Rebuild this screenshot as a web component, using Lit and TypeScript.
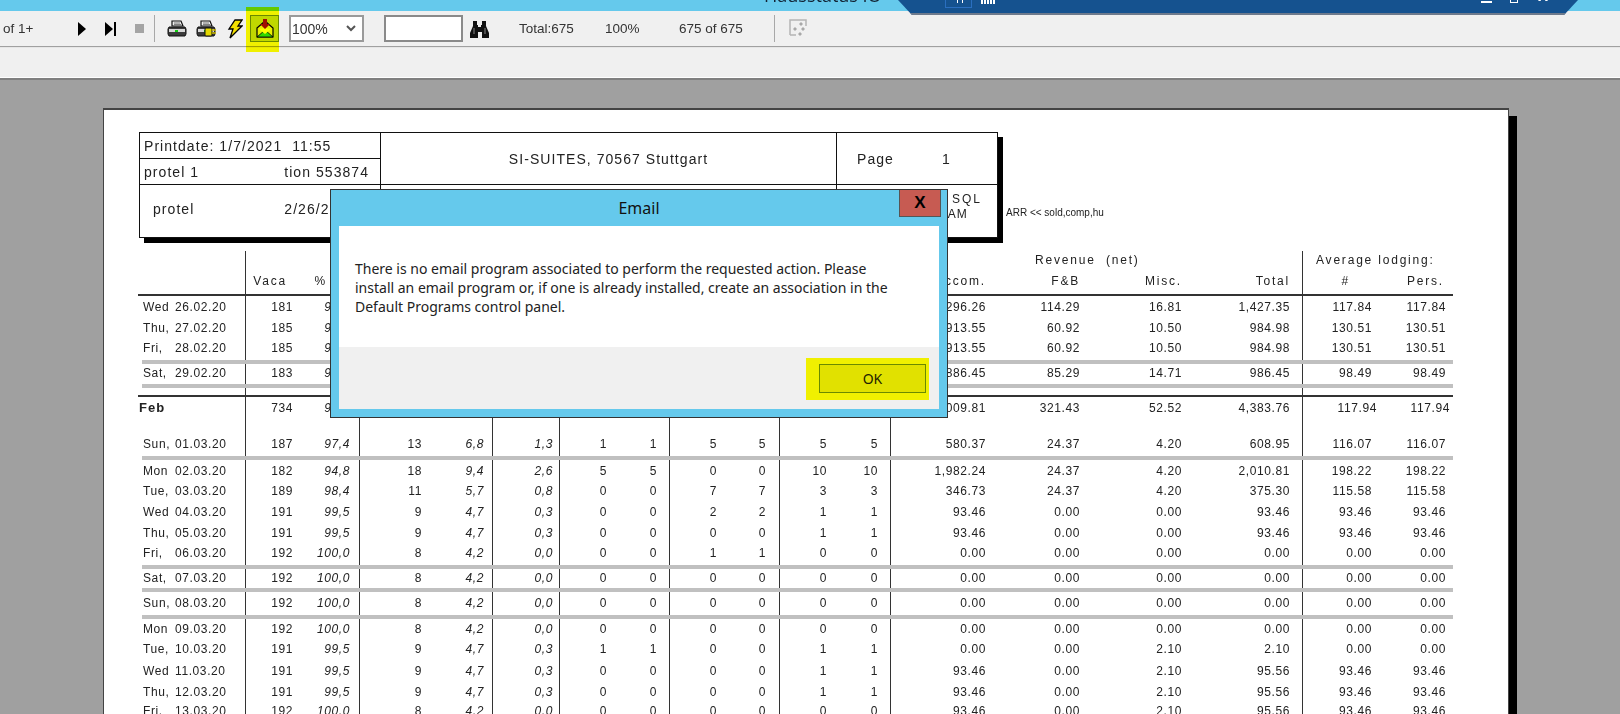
// app.ts
import { LitElement, html, css, svg } from 'lit';
import { customElement } from 'lit/decorators.js';

type Line = { c: number; cells: string[]; feb?: boolean };

const line = (c: number, s: string, feb = false): Line => ({ c, cells: s.split('|'), feb });

const blank = Array(19).fill('').join('|');

const hiddenRow = (day: string, date: string, vaca: string, pct: string, rest: string) =>
  `${day}|${date}|${vaca}|${pct}|||||||||` + '|' + rest;

// groups of rows between the grey rules: [top, bottom, rows]
const segments: { top: number; bottom: number; rows: Line[]; after?: string }[] = [
  {
    top: 296,
    bottom: 360,
    after: 'sep',
    rows: [
      line(307, hiddenRow('Wed', '26.02.20', '181', '94,3', '1,296.26|114.29|16.81|1,427.35|117.84|117.84')),
      line(328, hiddenRow('Thu,', '27.02.20', '185', '96,4', '913.55|60.92|10.50|984.98|130.51|130.51')),
      line(348, hiddenRow('Fri,', '28.02.20', '185', '96,4', '913.55|60.92|10.50|984.98|130.51|130.51')),
    ],
  },
  {
    top: 364,
    bottom: 384,
    after: 'sep',
    rows: [line(373, hiddenRow('Sat,', '29.02.20', '183', '95,3', '886.45|85.29|14.71|986.45|98.49|98.49'))],
  },
  { top: 388, bottom: 395, after: 'rule', rows: [line(391, blank)] },
  {
    top: 397,
    bottom: 456,
    after: 'sep',
    rows: [
      line(408, hiddenRow('Feb', '', '734', '95,6', '3,009.81|321.43|52.52|4,383.76|117.94|117.94'), true),
      line(444, 'Sun,|01.03.20|187|97,4|13|6,8|1,3|1|1|5|5|5|5|580.37|24.37|4.20|608.95|116.07|116.07'),
    ],
  },
  {
    top: 460,
    bottom: 565,
    after: 'sep',
    rows: [
      line(471, 'Mon|02.03.20|182|94,8|18|9,4|2,6|5|5|0|0|10|10|1,982.24|24.37|4.20|2,010.81|198.22|198.22'),
      line(491, 'Tue,|03.03.20|189|98,4|11|5,7|0,8|0|0|7|7|3|3|346.73|24.37|4.20|375.30|115.58|115.58'),
      line(512, 'Wed|04.03.20|191|99,5|9|4,7|0,3|0|0|2|2|1|1|93.46|0.00|0.00|93.46|93.46|93.46'),
      line(533, 'Thu,|05.03.20|191|99,5|9|4,7|0,3|0|0|0|0|1|1|93.46|0.00|0.00|93.46|93.46|93.46'),
      line(553, 'Fri,|06.03.20|192|100,0|8|4,2|0,0|0|0|1|1|0|0|0.00|0.00|0.00|0.00|0.00|0.00'),
    ],
  },
  {
    top: 569,
    bottom: 588,
    after: 'sep',
    rows: [line(578, 'Sat,|07.03.20|192|100,0|8|4,2|0,0|0|0|0|0|0|0|0.00|0.00|0.00|0.00|0.00|0.00')],
  },
  {
    top: 592,
    bottom: 615,
    after: 'sep',
    rows: [line(603, 'Sun,|08.03.20|192|100,0|8|4,2|0,0|0|0|0|0|0|0|0.00|0.00|0.00|0.00|0.00|0.00')],
  },
  {
    top: 619,
    bottom: 730,
    rows: [
      line(629, 'Mon|09.03.20|192|100,0|8|4,2|0,0|0|0|0|0|0|0|0.00|0.00|0.00|0.00|0.00|0.00'),
      line(649, 'Tue,|10.03.20|191|99,5|9|4,7|0,3|1|1|0|0|1|1|0.00|0.00|2.10|2.10|0.00|0.00'),
      line(671, 'Wed|11.03.20|191|99,5|9|4,7|0,3|0|0|0|0|1|1|93.46|0.00|2.10|95.56|93.46|93.46'),
      line(692, 'Thu,|12.03.20|191|99,5|9|4,7|0,3|0|0|0|0|1|1|93.46|0.00|2.10|95.56|93.46|93.46'),
      line(711, 'Fri,|13.03.20|192|100,0|8|4,2|0,0|0|0|0|0|0|0|93.46|0.00|2.10|95.56|93.46|93.46'),
    ],
  },
];

const printer = svg`
  <path d="M5 6V1h9l2 5z" fill="#eee" stroke="#111" stroke-width="1.2"/>
  <path d="M7 3h6M7 4.6h7" stroke="#777"/>
  <path d="M2 7h16l1 2v5l-1 2H2l-1-2V9z" fill="#3c3c3c" stroke="#111"/>
  <rect x="2" y="9" width="16" height="3" fill="#d8d8d8"/>
  <rect x="8" y="10" width="3" height="2" fill="#1c1"/>`;

@customElement('app-root')
export class AppRoot extends LitElement {
  static override styles = css`
    :host {
      display: block;
      position: relative;
      width: 1620px;
      height: 714px;
      overflow: hidden;
      font-family: 'Liberation Sans', Arial, sans-serif;
      color: #222;
      background: #a0a0a0;
    }
    * {
      box-sizing: border-box;
    }
    svg {
      display: block;
      flex: none;
    }

    .strip {
      height: 11px;
      background: #65c9ec;
    }
    .app-title {
      position: absolute;
      left: 764px;
      top: -15px;
      font: 18px/20px 'Open Sans', sans-serif;
      color: #123;
    }
    .session {
      position: absolute;
      left: 898px;
      top: 0;
      width: 680px;
      height: 15px;
      background: #15528f;
      border-bottom: 2px solid #6e7a8c;
      clip-path: polygon(0 0, 100% 0, 666px 100%, 14px 100%);
      color: #fff;
    }
    .pin {
      position: absolute;
      left: 47px;
      top: -1px;
      width: 27px;
      height: 9px;
      border: 1px solid #2a6fc0;
    }
    .pin::after {
      content: '';
      position: absolute;
      left: 11px;
      top: 0;
      width: 4px;
      height: 3px;
      border-right: 1px solid #fff;
      border-left: 1px solid #fff;
    }
    .bars {
      position: absolute;
      left: 83px;
      top: 0;
      width: 14px;
      height: 4px;
      background: repeating-linear-gradient(90deg, #fff 0 2px, #15528f 2px 3px);
    }
    .ip {
      position: absolute;
      left: 297px;
      top: -13px;
      font-size: 14px;
      line-height: 16px;
      white-space: nowrap;
    }
    .min {
      position: absolute;
      left: 583px;
      top: 1px;
      width: 11px;
      height: 2px;
      background: #fff;
    }
    .restore {
      position: absolute;
      left: 612px;
      top: -2px;
      width: 8px;
      height: 5px;
      border: 1px solid #fff;
    }
    .cross {
      position: absolute;
      left: 640px;
      top: -11px;
      font-size: 15px;
      line-height: 14px;
      font-weight: bold;
    }

    .toolbar {
      display: flex;
      align-items: center;
      height: 37px;
      padding-bottom: 1px;
      background: #f0f0f0;
      border-bottom: 1px solid #e6e6e6;
      box-shadow: inset 0 -2px 0 -1px #a0a0a0;
      font-size: 13.5px;
      color: #333;
    }
    .pager {
      width: 78px;
      padding-left: 3px;
    }
    .tb-sep {
      width: 1px;
      height: 27px;
      background: #a8a8a8;
    }
    .mail-btn {
      width: 29px;
      height: 27px;
      margin-left: 7px;
      padding: 3px 0 0 5px;
      background: #c0d8e8;
      border: 1px solid #6a8ab0;
    }
    .zoom-box {
      display: flex;
      align-items: center;
      justify-content: space-between;
      width: 75px;
      height: 27px;
      margin-left: 10px;
      padding: 0 6px 0 1px;
      background: #fff;
      border: 2px solid #9a9a9a;
      font-size: 14px;
    }
    .find {
      width: 79px;
      height: 27px;
      margin-left: 20px;
      background: #fff;
      border: 2px solid #8a8a8a;
    }
    .total {
      width: 86px;
      margin-left: 30px;
    }
    .pct {
      width: 74px;
    }
    .count {
      width: 95px;
    }

    .band {
      height: 32px;
      background: #f0f0f0;
      border-bottom: 2px solid #808080;
      box-shadow: inset 0 -1px 0 #fff;
    }

    .desk {
      height: 634px;
      padding: 28px 0 0 103px;
      background: #a0a0a0;
    }
    .sheet {
      width: 1406px;
      height: 640px;
      padding: 22px 0 0 35px;
      background: #fff;
      border-top: 2px solid #444;
      border-left: 1px solid #444;
      border-right: 1px solid #444;
      box-shadow: 8px 8px 0 #000;
      font-size: 12px;
      letter-spacing: 0.6px;
      color: #222;
      filter: blur(0.3px);
    }

    .top {
      display: flex;
      align-items: flex-start;
    }
    .head-box {
      display: grid;
      grid-template-columns: 241px 456px 160px;
      grid-template-rows: 52px 52px;
      width: 859px;
      height: 106px;
      border: 1px solid #111;
      box-shadow: 5px 5px 0 #000;
      font-size: 14px;
      letter-spacing: 1.05px;
    }
    .hb {
      border-right: 1px solid #111;
      border-bottom: 1px solid #111;
    }
    .hb:nth-child(3n) {
      border-right: none;
    }
    .hb:nth-child(n + 4) {
      border-bottom: none;
    }
    .hb-row {
      display: flex;
      justify-content: space-between;
      height: 25px;
      padding: 5px 11px 0 4px;
      line-height: 17px;
      white-space: pre;
    }
    .hb-row + .hb-row {
      height: 27px;
      border-top: 1px solid #111;
    }
    .owner {
      display: flex;
      padding: 16px 0 0 13px;
      line-height: 17px;
      white-space: nowrap;
    }
    .owner span + span {
      margin-left: 90px;
    }
    .title-cell {
      display: flex;
      align-items: center;
      justify-content: center;
      padding-top: 1px;
    }
    .page-cell {
      display: flex;
      align-items: center;
      padding-left: 20px;
    }
    .page-cell span + span {
      margin-left: 48px;
    }
    .sql {
      padding: 7px 0 0 103px;
      font-size: 12px;
      line-height: 15px;
      white-space: nowrap;
    }
    .sql b {
      display: block;
      margin-left: 12px;
      font-weight: normal;
      letter-spacing: 2px;
    }
    .note {
      margin: 76px 0 0 8px;
      font-size: 10px;
      line-height: 10px;
      letter-spacing: 0;
      white-space: nowrap;
    }

    .table {
      width: 1311px;
      margin: 13px 0 0 3px;
    }
    .row {
      display: grid;
      grid-template-columns:
        33px 71px 46px 68px 61px 72px 67px 46px 64px 46px 64px 46px 65px
        94px 94px 102px 122px 68px 74px 8px;
    }
    .c {
      padding-top: var(--pad);
      line-height: 14px;
      text-align: right;
      white-space: nowrap;
    }
    .c span {
      margin-right: -1px;
    }
    .c:nth-child(1),
    .c:nth-child(2) {
      text-align: left;
    }
    .c:nth-child(1) {
      padding-left: 1px;
    }
    .c:nth-child(4),
    .c:nth-child(6),
    .c:nth-child(7) {
      font-style: italic;
    }
    .c:nth-child(2),
    .c:nth-child(4),
    .c:nth-child(6),
    .c:nth-child(7),
    .c:nth-child(9),
    .c:nth-child(11),
    .c:nth-child(13),
    .c:nth-child(17) {
      border-right: 1px solid #333;
    }
    .c:nth-child(4) {
      padding-right: 10px;
    }
    .c:nth-child(6) {
      padding-right: 9px;
    }
    .c:nth-child(7) {
      padding-right: 7px;
    }
    .c:nth-child(9),
    .c:nth-child(13),
    .c:nth-child(17) {
      padding-right: 13px;
    }
    .c:nth-child(11) {
      padding-right: 14px;
    }
    .feb .c:nth-child(1) {
      margin-left: -4px;
      font-size: 13px;
      font-weight: bold;
      letter-spacing: 1px;
    }
    .feb .c:nth-child(18) span {
      margin-right: -6px;
    }
    .feb .c:nth-child(19) span {
      margin-right: -5px;
    }
    .head .c {
      letter-spacing: 1.8px;
      font-style: normal;
    }
    .head .c:nth-child(3) {
      padding-right: 6px;
    }
    .head .c:nth-child(4) {
      padding-right: 33px;
    }
    .head .c:nth-child(18) {
      padding-right: 22px;
    }
    .head .c:nth-child(19) {
      padding-right: 2px;
    }
    .spread {
      grid-column: span 3;
      letter-spacing: 1.5px;
      white-space: pre;
    }
    .spread.rev {
      padding-left: 144px;
      text-align: left !important;
    }
    .spread.avg {
      padding-left: 13px;
      text-align: left !important;
    }
    .v {
      border-right: 1px solid #333;
    }
    .sep {
      height: 4px;
      background: #c0c0c0;
    }
    .rule {
      height: 2px;
      margin-left: -4px;
      background: #333;
    }

    .dialog {
      position: absolute;
      left: 330px;
      top: 189px;
      display: flex;
      flex-direction: column;
      width: 618px;
      height: 229px;
      padding: 0 8px 8px;
      background: #65c9ec;
      border: 1px solid #333;
    }
    .dlg-title {
      height: 36px;
      padding-top: 6px;
      text-align: center;
      font: 16px/24px 'Noto Sans', sans-serif;
      color: #111;
    }
    .close {
      position: absolute;
      right: 6px;
      top: 0;
      display: flex;
      align-items: center;
      justify-content: center;
      width: 42px;
      height: 27px;
      background: #c75b52;
      border: 1px solid #555;
      border-top: none;
      font-size: 17px;
      font-weight: bold;
      color: #000;
    }
    .dlg-body {
      height: 121px;
      padding: 33px 16px 0;
      background: #fff;
      font: 14px/19px 'Noto Sans', sans-serif;
      color: #222;
    }
    .dlg-foot {
      position: relative;
      flex: 1;
      background: #f0f0f0;
    }
    .ok {
      position: absolute;
      left: 480px;
      top: 17px;
      display: flex;
      align-items: center;
      justify-content: center;
      width: 107px;
      height: 29px;
      background: #e1e1e1;
      border: 1px solid #6a8ab0;
      font: 14px 'Noto Sans', sans-serif;
      color: #222;
    }
    .marker {
      position: absolute;
      background: #ffff00;
      mix-blend-mode: multiply;
    }
    .marker.tool {
      left: 246px;
      top: 7px;
      width: 33px;
      height: 45px;
    }
    .marker.action {
      left: 467px;
      top: 11px;
      width: 123px;
      height: 42px;
    }
  `;

  private renderSegment(seg: (typeof segments)[number]) {
    let top = seg.top;
    return html`
      ${seg.rows.map((r, i) => {
        const next = seg.rows[i + 1];
        const bottom = next ? Math.round((r.c + next.c) / 2) : seg.bottom;
        const h = bottom - top;
        const pad = r.c - 7 - top;
        top = bottom;
        return html`<div class="row ${r.feb ? 'feb' : ''}" style="height:${h}px;--pad:${pad}px">
          ${r.cells.map((t) => html`<div class="c"><span>${t}</span></div>`)}
          <div class="c"></div>
        </div>`;
      })}
      ${seg.after ? html`<div class=${seg.after}></div>` : ''}
    `;
  }

  override render() {
    return html`
      <div class="strip"></div>
      <div class="app-title">Hausstatus IO</div>
      <div class="session">
        <div class="pin"></div>
        <div class="bars"></div>
        <div class="ip">172.31.2.16:21</div>
        <div class="min"></div>
        <div class="restore"></div>
        <div class="cross">X</div>
      </div>

      <div class="toolbar">
        <div class="pager">of 1+</div>
        <svg width="8" height="14" viewBox="0 0 8 14"><path d="M0 0l8 7-8 7z" fill="#000" /></svg>
        <svg style="margin-left:19px" width="12" height="14" viewBox="0 0 12 14">
          <path d="M0 0l8 7-8 7z" fill="#000" /><rect x="9" width="2" height="14" fill="#000" />
        </svg>
        <svg style="margin-left:18px" width="10" height="10" viewBox="0 0 10 10">
          <rect width="9" height="9" fill="#a4a4a4" />
        </svg>
        <div class="tb-sep" style="margin-left:9px"></div>
        <svg style="margin-left:12px" width="20" height="18" viewBox="0 0 20 18">${printer}</svg>
        <svg style="margin-left:9px" width="20" height="18" viewBox="0 0 20 18">
          ${printer}
          <rect x="9" y="8" width="7" height="8" rx="1" fill="#e4d800" stroke="#111" />
          <path d="M16 10h4M16 13h4" stroke="#c8b800" stroke-width="1.5" />
        </svg>
        <svg style="margin-left:11px" width="16" height="20" viewBox="0 0 16 20">
          <path d="M8 1h7l-4 6h4L3 19l3-9H2z" fill="#f4e000" stroke="#000" stroke-width="1.3" />
        </svg>
        <div class="mail-btn">
          <svg width="18" height="19" viewBox="0 0 18 19">
            <path d="M1 9l8-7 8 7v9H1z" fill="#e8f0ff" stroke="#000" stroke-width="1.2" />
            <path d="M1 18l8-7 8 7z" fill="#30d8f0" stroke="#000" stroke-width="0.8" />
            <path d="M3 10l6 5 6-5-6-1z" fill="#fff" />
            <path d="M7 0h4v5h3l-5 5-5-5h3z" fill="#a01010" />
          </svg>
        </div>
        <div class="zoom-box">
          100%
          <svg width="10" height="7" viewBox="0 0 10 7">
            <path d="M1 1l4 4 4-4" fill="none" stroke="#555" stroke-width="2" />
          </svg>
        </div>
        <div class="find"></div>
        <svg style="margin-left:7px" width="19" height="18" viewBox="0 0 19 18">
          <path d="M3 1h4v4h1v2h3V5h1V1h4v5l3 7v5h-7v-6H8v6H0v-5l3-7z" fill="#111" />
          <path d="M4 8v6M15 8v6" stroke="#888" />
        </svg>
        <div class="total">Total:675</div>
        <div class="pct">100%</div>
        <div class="count">675 of 675</div>
        <div class="tb-sep"></div>
        <svg style="margin-left:14px" width="19" height="20" viewBox="0 0 19 20">
          <path d="M1 16V1h16v6" fill="none" stroke="#b4b4b4" stroke-width="1.5" />
          <path d="M1 16h6" stroke="#b4b4b4" stroke-width="1.5" />
          <path d="M12 3l2 2-2 2-2-2zM6 8l2 2-2 2-2-2zM14 8l2 2-2 2-2-2zM11 13l2 2-2 2-2-2z" fill="#a8a8a8" />
        </svg>
      </div>
      <div class="band"></div>

      <div class="desk">
        <div class="sheet">
          <div class="top">
            <div class="head-box">
              <div class="hb">
                <div class="hb-row"><span>Printdate: 1/7/2021  11:55</span></div>
                <div class="hb-row"><span>protel 1</span><span>tion 553874</span></div>
              </div>
              <div class="hb title-cell">SI-SUITES, 70567 Stuttgart</div>
              <div class="hb page-cell"><span>Page</span><span>1</span></div>
              <div class="hb owner"><span>protel</span><span>2/26/2020</span></div>
              <div class="hb"></div>
              <div class="hb sql"><b>SQL</b>4AM</div>
            </div>
            <div class="note">ARR &lt;&lt; sold,comp,hu</div>
          </div>

          <div class="table">
            <div class="row head" style="height:19px;--pad:2px">
              <div class="c"></div>
              <div class="c"></div>
              <div class="c"></div>
              <div class="c"></div>
              <div class="c"></div>
              <div class="c"></div>
              <div class="c"></div>
              <div class="c"></div>
              <div class="c"></div>
              <div class="c"></div>
              <div class="c"></div>
              <div class="c"></div>
              <div class="c"></div>
              <div class="c spread rev">Revenue  (net)</div>
              <div class="c v"></div>
              <div class="c spread avg">Average lodging:</div>
            </div>
            <div class="row head" style="height:24px;--pad:4px">
              ${['', '', 'Vaca', '%', '', '', '', '', '', '', '', '', '', 'Accom.', 'F&B', 'Misc.', 'Total', '#', 'Pers.', ''].map(
                (t) => html`<div class="c"><span>${t}</span></div>`
              )}
            </div>
            <div class="rule"></div>
            ${segments.map((s) => this.renderSegment(s))}
          </div>
        </div>
      </div>

      <div class="marker tool"></div>

      <div class="dialog">
        <div class="dlg-title">Email</div>
        <div class="close">X</div>
        <div class="dlg-body">
          There is no email program associated to perform the requested action. Please<br />
          install an email program or, if one is already installed, create an association in the<br />
          Default Programs control panel.
        </div>
        <div class="dlg-foot">
          <div class="ok">OK</div>
          <div class="marker action"></div>
        </div>
      </div>
    `;
  }
}
